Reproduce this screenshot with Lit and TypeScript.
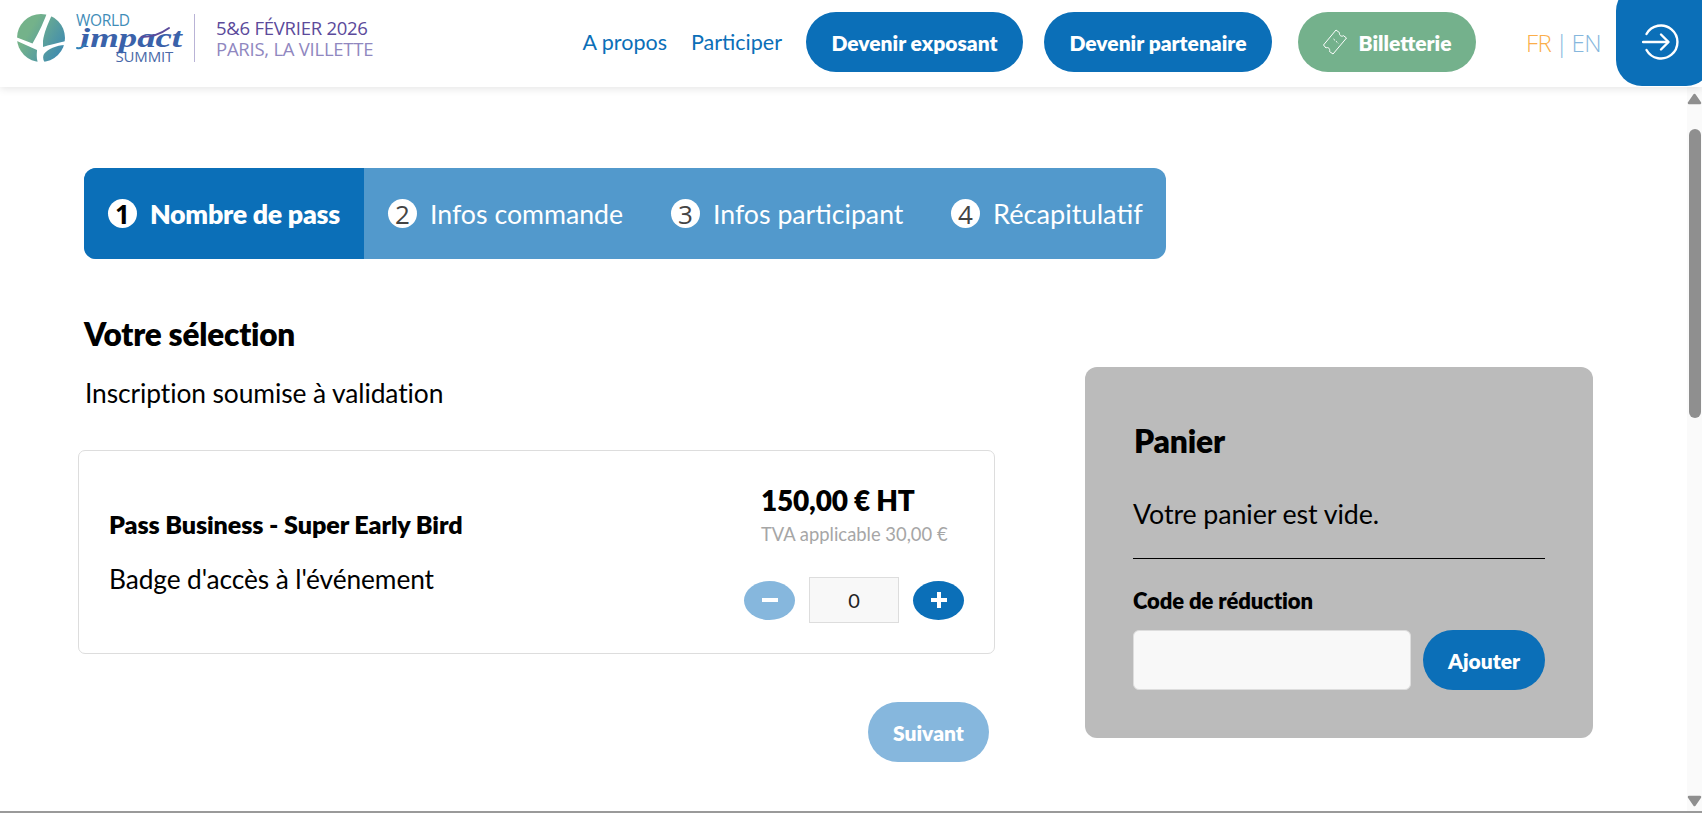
import { LitElement, html, css, svg } from "lit";
import { customElement } from "lit/decorators.js";

const logo = svg`<svg class="mark" viewBox="0 0 48 48" width="48" height="48">
  <defs><linearGradient id="lg" x1="0" y1="0.1" x2="1" y2="0.7"><stop offset="0.3" stop-color="#74b28a"/><stop offset="1" stop-color="#3f8bb0"/></linearGradient></defs>
  <circle cx="24" cy="24" r="24" fill="url(#lg)"/>
  <path d="M30 -1 L36 -1 C31 9 27 19 26 27 L26 33 C32 31 40 29 49 27 L49 31 C40 31 31 35 27 40 C25.5 43 26 46 28 49 L21 49 C19 44 20 39 20 36 L0 27 L0 23.5 L15.5 29.5 C20 22 26 10 30 -1 Z" fill="#fff"/>
</svg>`;

const swash = svg`<svg class="sw" viewBox="0 0 97 24" width="97" height="24" fill="none" stroke-linecap="round">
  <path d="M1 22 C4 23 7 21 9 18" stroke="#2f7fb6" stroke-width="2"/>
  <path d="M66 11 C76 11 86 7 93 2" stroke="#5b4a9b" stroke-width="2"/>
</svg>`;

const ticket = svg`<svg class="tk" viewBox="0 0 24 26" width="24" height="26" fill="none" stroke="#fff" stroke-width="1" stroke-linejoin="round">
  <path d="M0.5 16 L13 1 L16.5 3.7 C16 6.5 18.5 8 20.5 6.7 L23.5 9 L10 25 L6.5 22.5 C7.5 20 5 17.5 3 19 Z"/>
  <path d="M10.5 10 L15.5 14.5" stroke-dasharray="2 1.2"/>
</svg>`;

const login = svg`<svg viewBox="0 0 38 38" width="38" height="38" fill="none" stroke="#fff" stroke-width="2.4" stroke-linecap="round" stroke-linejoin="round">
  <path d="M4.5 11 A16.5 16.5 0 1 1 4.5 27"/>
  <path d="M1 19 H26"/>
  <path d="M19 11.5 L26.5 19 L19 26.5"/>
</svg>`;

const arrowUp = svg`<svg viewBox="0 0 15 12" width="15" height="12"><path d="M7.5 2 L13 10 H2 Z" fill="#8f8f8f" stroke="#8f8f8f" stroke-width="2.5" stroke-linejoin="round"/></svg>`;
const arrowDown = svg`<svg viewBox="0 0 15 12" width="15" height="12"><path d="M7.5 10 L13 2 H2 Z" fill="#8f8f8f" stroke="#8f8f8f" stroke-width="2.5" stroke-linejoin="round"/></svg>`;

@customElement("app-root")
export class AppRoot extends LitElement {
  static styles = css`
    :host { display: block; height: 813px; overflow: hidden; position: relative; background: #fff;
      font-family: "Lato", "Noto Sans", sans-serif; color: #000; }
    * { box-sizing: border-box; }
    svg { display: block; flex: none; }
    .hdr { height: 87px; display: flex; align-items: center; background: #fff; box-shadow: 0 2px 8px rgba(0,0,0,.1);
      position: relative; z-index: 2; padding-left: 17px; }
    .logo { display: flex; align-items: center; height: 48px; margin-top: -11px; }
    .wm { width: 97px; height: 48px; margin-left: 11px; display: flex; flex-direction: column; line-height: 1; font-family: "Open Sans", sans-serif; position: relative; }
    .wm .w { font-size: 15.5px; line-height: 12px; height: 12px; color: #3f8db8; letter-spacing: -.3px; }
    .wm .i { font-family: "Liberation Serif", serif; font-style: italic; font-weight: 700; font-size: 27px; line-height: 24px; height: 24px;
      transform: scaleX(1.36); transform-origin: left center; width: 71px; white-space: nowrap;
      color: #3a62aa; padding-left: 3px; }
    .wm .s { font-size: 15px; line-height: 12px; height: 12px; text-align: right; color: #4a69a8; letter-spacing: -.2px; }
    .sw { position: absolute; left: 0; top: 12px; }
    .sep { width: 1px; height: 48px; background: #b9b3d6; margin-left: 21px; }
    .date { margin-left: 21px; font-family: "Open Sans", sans-serif; font-size: 18.5px; line-height: 21px; margin-top: -1px; color: #5b4a9b; letter-spacing: -.25px; font-weight: 500; white-space: nowrap; }
    .date div + div { color: #9087bf; font-weight: 400; }
    .nav { display: flex; align-items: center; margin-left: auto; height: 60px; margin-top: -3px; }
    .lnk { color: #0b6fb8; font-size: 21.5px; white-space: nowrap; }
    .lnk.a { margin-right: 24px; }
    .lnk.b { margin-right: 24px; }
    .btn { display: flex; align-items: center; justify-content: center; height: 60px; border-radius: 30px; background: #0b6fb8; color: #fff;
      font-weight: 800; font-size: 21px; white-space: nowrap; border: none; font-family: inherit; padding: 0; }
    .b1 { width: 217px; margin-right: 21px; }
    .b2 { width: 228px; margin-right: 26px; }
    .b3 { width: 178px; background: #74b18c; gap: 12px; margin-right: 50px; }
    .lang { font-family: "Open Sans", sans-serif; font-size: 24px; color: #86b7dd; white-space: nowrap; width: 90px; display: flex; gap: 4px; font-weight: 300; letter-spacing: -.6px; }
    .lang .fr { color: #fbae4a; }
    .in { width: 96px; height: 101px; margin-top: -13px; margin-right: -10px; background: #0b6fb8; border-radius: 26px; display: flex; align-items: center;
      padding: 13px 0 0 26px; flex: none; }

    .body { display: flex; height: 726px; }
    .main { flex: 1; min-width: 0; padding: 81px 0 0 84px; }
    .bar { width: 15px; flex: none; background: #fafafa; display: flex; flex-direction: column; align-items: center; }
    .up { margin-top: 6px; }
    .thumb { margin-top: 24px; width: 12px; height: 289px; border-radius: 6px; background: #8f8f8f; }
    .down { margin-top: auto; margin-bottom: 6px; }
    .edge { position: absolute; left: 0; right: 0; bottom: 0; height: 2px; background: #9a9a9a; z-index: 3; }

    .steps { width: 1082px; height: 91px; display: flex; background: #5299cc; border-radius: 12px; overflow: hidden; color: #fff; font-size: 26.7px; }
    .st { display: flex; align-items: center; gap: 13px; white-space: nowrap; }
    .st.on { width: 280px; background: #0b6fb8; font-weight: 800; padding-left: 24px; font-size: 26.8px; letter-spacing: -.3px; }
    .st.s2 { width: 307px; padding-left: 24px; }
    .st.s3 { width: 280px; }
    .st.s4 { flex: 1; font-size: 27.2px; }
    .num { width: 29px; height: 29px; border-radius: 50%; background: #fff; color: #444; font-size: 26px; font-weight: 400; letter-spacing: 0; display: flex; align-items: center; justify-content: center; flex: none; font-family: "Open Sans", sans-serif; }
    .on .num { color: #000; font-weight: 700; }

    .cols { display: flex; }
    .left { width: 917px; margin-left: -6px; flex: none; padding-top: 54px; display: flex; flex-direction: column; }
    h1 { margin: 0 0 0 6px; font-size: 31.5px; font-weight: 800; line-height: 42px; letter-spacing: -.2px; }
    .sub { margin: 20px 0 0 7px; font-size: 26.4px; line-height: 36px; font-weight: 400; letter-spacing: -.1px; }
    .card { margin-top: 39px; height: 204px; border: 1px solid #ddd; border-radius: 7px; display: flex; justify-content: space-between; padding: 0 30px 0 30px; }
    .info { padding-top: 55px; }
    .pn { font-size: 25.1px; font-weight: 800; line-height: 36px; letter-spacing: -.1px; }
    .pd { font-size: 26.3px; line-height: 36px; margin-top: 19px; letter-spacing: -.1px; }
    .price { width: 220px; padding-top: 29px; }
    .pr { font-size: 28px; font-weight: 800; line-height: 40px; margin-left: 17px; letter-spacing: -.2px; white-space: nowrap; }
    .tva { font-size: 18.4px; line-height: 24px; color: #a6a6a6; margin: 2px 0 0 17px; white-space: nowrap; }
    .qty { display: flex; align-items: center; margin-top: 31px; }
    .rnd { width: 51px; height: 39px; border-radius: 50%; border: none; padding: 0; display: flex; align-items: center; justify-content: center; background: #0b6fb8; flex: none; }
    .rnd.off { background: #86b7dd; }
    .rnd span { display: block; position: relative; width: 16px; height: 4px; background: #fff; }
    .rnd .pl::after { content: ""; position: absolute; left: 6px; top: -6px; width: 4px; height: 16px; background: #fff; }
    .val { width: 90px; height: 46px; margin: 0 14px 0 14px; border: 1px solid #ddd; background: #f8f8f8; display: flex; align-items: center; justify-content: center; font-size: 20px; color: #222; flex: none; }
    .next { align-self: flex-end; margin: 48px 6px 0 0; width: 121px; background: #86b7dd; }

    .panel { margin: 108px 0 0 90px; width: 508px; height: 371px; background: #bbb; border-radius: 12px; padding: 50px 48px 0 48px; }
    .panel h2 { margin: 0 0 0 1px; font-size: 31.8px; line-height: 48px; font-weight: 800; letter-spacing: -.2px; }
    .empty { margin-top: 27px; font-size: 26.8px; line-height: 44px; padding-bottom: 22px; border-bottom: 1px solid #000; letter-spacing: -.1px; }
    .code { margin-top: 25px; font-size: 22px; line-height: 34px; font-weight: 800; letter-spacing: -.1px; }
    .row { display: flex; gap: 12px; margin-top: 12px; align-items: center; }
    .inp { width: 278px; height: 60px; background: #f8f8f8; border: 1px solid #ddd; border-radius: 6px; }
    .add { width: 122px; }
  `;

  render() {
    return html`
      <header class="hdr">
        <div class="logo">
          ${logo}
          <div class="wm"><div class="w">WORLD</div><div class="i">impact</div><div class="s">SUMMIT</div>${swash}</div>
          <div class="sep"></div>
          <div class="date"><div>5&amp;6 FÉVRIER 2026</div><div>PARIS, LA VILLETTE</div></div>
        </div>
        <nav class="nav">
          <span class="lnk a">A propos</span>
          <span class="lnk b">Participer</span>
          <button class="btn b1">Devenir exposant</button>
          <button class="btn b2">Devenir partenaire</button>
          <button class="btn b3">${ticket}<span>Billetterie</span></button>
          <div class="lang"><span class="fr">FR</span><span>|</span><span>EN</span></div>
          <div class="in">${login}</div>
        </nav>
      </header>
      <div class="body">
        <main class="main">
          <div class="steps">
            <div class="st on"><span class="num">1</span>Nombre de pass</div>
            <div class="st s2"><span class="num">2</span>Infos commande</div>
            <div class="st s3"><span class="num">3</span>Infos participant</div>
            <div class="st s4"><span class="num">4</span>Récapitulatif</div>
          </div>
          <div class="cols">
            <section class="left">
              <h1>Votre sélection</h1>
              <p class="sub">Inscription soumise à validation</p>
              <div class="card">
                <div class="info">
                  <div class="pn">Pass Business - Super Early Bird</div>
                  <div class="pd">Badge d'accès à l'événement</div>
                </div>
                <div class="price">
                  <div class="pr">150,00 € HT</div>
                  <div class="tva">TVA applicable 30,00 €</div>
                  <div class="qty">
                    <button class="rnd off"><span></span></button>
                    <div class="val">0</div>
                    <button class="rnd"><span class="pl"></span></button>
                  </div>
                </div>
              </div>
              <button class="btn next">Suivant</button>
            </section>
            <aside class="panel">
              <h2>Panier</h2>
              <div class="empty">Votre panier est vide.</div>
              <div class="code">Code de réduction</div>
              <div class="row"><div class="inp"></div><button class="btn add">Ajouter</button></div>
            </aside>
          </div>
        </main>
        <div class="bar"><div class="up">${arrowUp}</div><div class="thumb"></div><div class="down">${arrowDown}</div></div>
      </div>
      <div class="edge"></div>
    `;
  }
}
